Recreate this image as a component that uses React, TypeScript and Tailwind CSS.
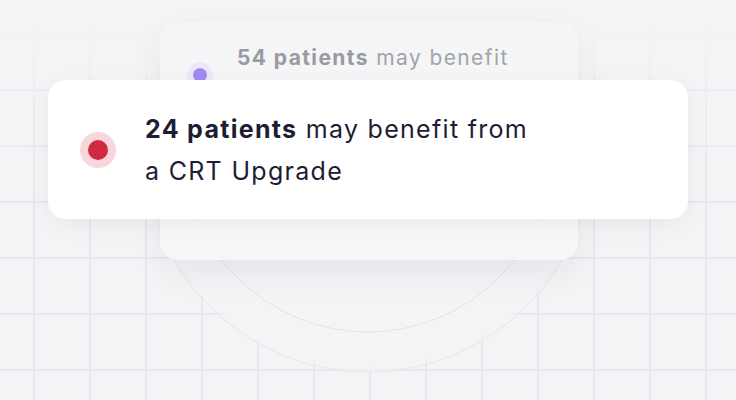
export default function App() {
  return (
    <div
      className="relative w-[736px] h-[400px] overflow-hidden bg-[#f3f4f6]"
      style={{ fontFamily: 'Inter, "Noto Sans", sans-serif' }}
    >
      {/* grid */}
      <div className="absolute inset-0 bg-[linear-gradient(to_right,#e7e8eb_2px,transparent_2px),linear-gradient(to_bottom,#e7e8eb_2px,transparent_2px)] bg-[size:56px_56px] bg-[position:33px_33px] [mask-image:linear-gradient(to_bottom,transparent_5%,rgba(0,0,0,0.45)_22%,black_50%)]" />

      {/* rings */}
      <svg className="absolute inset-0" width="736" height="400">
        <defs>
          <radialGradient id="disc" cx="368" cy="148" r="224" gradientUnits="userSpaceOnUse">
            <stop offset="0.8" stopColor="#f3f4f6" stopOpacity="1" />
            <stop offset="0.97" stopColor="#f3f4f6" stopOpacity="0.95" />
            <stop offset="1" stopColor="#f3f4f6" stopOpacity="0.6" />
          </radialGradient>
          <linearGradient id="fade" x1="0" y1="0" x2="0" y2="400" gradientUnits="userSpaceOnUse">
            <stop offset="0.45" stopColor="white" stopOpacity="0" />
            <stop offset="0.65" stopColor="white" stopOpacity="1" />
          </linearGradient>
          <mask id="ringMask">
            <rect width="736" height="400" fill="url(#fade)" />
          </mask>
        </defs>
        <circle cx="368" cy="148" r="224" fill="url(#disc)" />
        <g mask="url(#ringMask)">
          <circle cx="368" cy="148" r="184" fill="none" stroke="#e1e2e6" strokeWidth="1" />
          <circle cx="368" cy="148" r="224" fill="none" stroke="#e4e5e9" strokeWidth="1" />
        </g>
      </svg>

      {/* back card */}
      <div className="absolute left-[160px] top-[22px] w-[418px] h-[238px] rounded-[18px] bg-[linear-gradient(to_bottom,rgba(247,248,249,0.3),rgba(246,247,249,0.95)_70%)] shadow-[0_14px_34px_rgba(17,24,39,0.06)]">
        <div className="flex items-start gap-[24px] pl-[27px] pt-[18px]">
          <div className="mt-[22px] flex h-[26px] w-[26px] items-center justify-center rounded-full bg-[#ece8fb]">
            <div className="h-[14px] w-[14px] rounded-full bg-[#a28cf4]" />
          </div>
          <p className="text-[21px] leading-[36px] tracking-[1.4px] text-[#a3a4a8]">
            <span className="font-bold text-[#9a9ba0]">54 patients</span> may benefit
          </p>
        </div>
      </div>

      {/* front card */}
      <div className="relative pl-[48px] pt-[80px]">
        <div className="flex w-[640px] h-[139px] items-center gap-[29px] rounded-[18px] bg-white pl-[32px] shadow-[0_6px_24px_rgba(17,24,39,0.05)]">
          <div className="flex h-[36px] w-[36px] shrink-0 items-center justify-center rounded-full bg-[#f8d6dc]">
            <div className="h-[20px] w-[20px] rounded-full bg-[#d02a43]" />
          </div>
          <p className="w-[396px] text-[25px] leading-[42px] tracking-[1.3px] text-[#1d1e33]">
            <span className="font-bold">24 patients</span> may benefit from a CRT Upgrade
          </p>
        </div>
      </div>
    </div>
  );
}
